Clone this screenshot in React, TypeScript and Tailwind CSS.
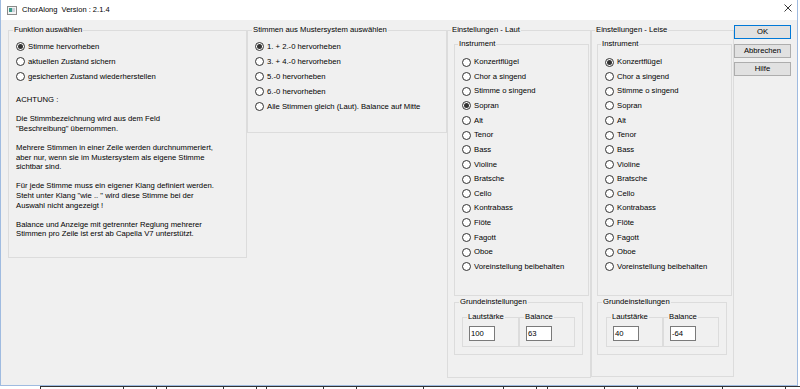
import React from 'react';

const FONT = "font-['Liberation_Sans',Arial,sans-serif]";

function Radio({ label, checked }: { label: string; checked?: boolean }) {
  return (
    <div className="flex items-center gap-[3px] h-[15px]">
      <span className="w-[9px] h-[9px] rounded-full border border-[#333] bg-white flex items-center justify-center shrink-0">
        {checked && <span className="w-[5px] h-[5px] rounded-full bg-[#333]" />}
      </span>
      <span className="whitespace-nowrap">{label}</span>
    </div>
  );
}

function InstRadio({ label, checked }: { label: string; checked?: boolean }) {
  return (
    <div className="flex items-center gap-[3px] h-[14.64px]">
      <span className="w-[9px] h-[9px] rounded-full border border-[#333] bg-white flex items-center justify-center shrink-0">
        {checked && <span className="w-[5px] h-[5px] rounded-full bg-[#333]" />}
      </span>
      <span className="whitespace-nowrap">{label}</span>
    </div>
  );
}

const instruments = [
  'Konzertflügel',
  'Chor a singend',
  'Stimme o singend',
  'Sopran',
  'Alt',
  'Tenor',
  'Bass',
  'Violine',
  'Bratsche',
  'Cello',
  'Kontrabass',
  'Flöte',
  'Fagott',
  'Oboe',
  'Voreinstellung beibehalten',
];

function Legend({ children }: { children: React.ReactNode }) {
  return <legend className="px-[1px] leading-[10px]">{children}</legend>;
}

function Settings({
  title,
  selected,
  volume,
  balance,
  leise,
}: {
  title: string;
  selected: string;
  volume: string;
  balance: string;
  leise?: boolean;
}) {
  return (
    <fieldset
      className={
        leise
          ? 'w-[143px] h-[352px] border border-[#dcdcdc] pl-[3px] shrink-0'
          : 'w-[144px] h-[353px] border border-[#dcdcdc] pl-[3px] shrink-0'
      }
    >
      <Legend>{title}</Legend>
      <fieldset
        className={
          leise
            ? 'ml-[2px] mt-[4px] w-[135px] h-[257px] border border-[#dcdcdc] pl-[3px]'
            : 'ml-[3px] mt-[4px] w-[135px] h-[257px] border border-[#dcdcdc] pl-[3px]'
        }
      >
        <Legend>Instrument</Legend>
        <div className="pl-[4px] pt-[5.7px]">
          {instruments.map((i) => (
            <InstRadio key={i} label={i} checked={i === selected} />
          ))}
        </div>
      </fieldset>
      <fieldset
        className={
          leise
            ? 'ml-[2px] mt-[1px] w-[130px] h-[58px] border border-[#dcdcdc] pl-[4px]'
            : 'ml-[3px] mt-[1px] w-[129px] h-[58px] border border-[#dcdcdc] pl-[4px]'
        }
      >
        <Legend>Grundeinstellungen</Legend>
        <div className={leise ? 'flex ml-[4px] mt-[5px]' : 'flex ml-[3px] mt-[5px]'}>
          <fieldset className="w-[57px] h-[35px] border border-[#dcdcdc] pl-[4px]">
            <Legend>Lautstärke</Legend>
            <div className="ml-[2px] mt-[4px] w-[26px] h-[15px] bg-white border border-[#7a7a7a] pl-[1px] leading-[13px]">
              {volume}
            </div>
          </fieldset>
          <fieldset className="w-[56px] h-[35px] border border-[#dcdcdc] pl-[4px]">
            <Legend>Balance</Legend>
            <div className="ml-[2px] mt-[4px] w-[26px] h-[15px] bg-white border border-[#7a7a7a] pl-[1px] leading-[13px]">
              {balance}
            </div>
          </fieldset>
        </div>
      </fieldset>
    </fieldset>
  );
}

export default function App() {
  return (
    <div className={`w-[800px] h-[389px] bg-white overflow-hidden text-[7.7px] text-black ${FONT}`}>
      <div className="w-[798px] h-[386px] bg-[#f0f0f0] border-l border-r border-b border-[#9fbbe0] flex flex-col">
        {/* title bar */}
        <div className="h-[20px] bg-white flex items-center pl-[6px] pr-[4px] shrink-0">
          <svg width="10" height="9" viewBox="0 0 10 9" className="shrink-0">
            <rect x="0.5" y="0.5" width="9" height="8" fill="#f4f4f4" stroke="#8a8a8a" />
            <rect x="2" y="2" width="3" height="4" fill="#3a9a8a" />
            <rect x="5" y="2" width="3" height="4" fill="#c8d0d8" />
          </svg>
          <span className="ml-[5px] text-[7.5px] leading-none">ChorAlong&nbsp;&nbsp;Version : 2.1.4</span>
          <div className="flex-1" />
          <svg width="8" height="8" viewBox="0 0 8 8" className="mr-[1px] mb-[4px]">
            <path d="M0.5 0.5 L7.5 7.5 M7.5 0.5 L0.5 7.5" stroke="#222" strokeWidth="0.9" />
          </svg>
        </div>

        {/* body */}
        <div className="flex items-start pl-[7px] pt-[5px]">
          <fieldset className="w-[239px] h-[233px] border border-[#dcdcdc] pl-[4px] shrink-0">
            <Legend>Funktion auswählen</Legend>
            <div className="pl-[3px] pt-[4px]">
              <Radio label="Stimme hervorheben" checked />
              <Radio label="aktuellen Zustand sichern" />
              <Radio label="gesicherten Zustand wiederherstellen" />
              <div className="mt-[11px] leading-[9.6px] whitespace-pre">
                <p className="mb-[9.6px]">ACHTUNG :</p>
                <p className="mb-[9.6px]">
                  Die Stimmbezeichnung wird aus dem Feld{'\n'}"Beschreibung" übernommen.
                </p>
                <p className="mb-[9.6px]">
                  Mehrere Stimmen in einer Zeile werden durchnummeriert,{'\n'}aber nur, wenn sie im Mustersystem als eigene Stimme{'\n'}sichtbar sind.
                </p>
                <p className="mb-[9.6px]">
                  Für jede Stimme muss ein eigener Klang definiert werden.{'\n'}Steht unter Klang "wie .. " wird diese Stimme bei der{'\n'}Auswahl nicht angezeigt !
                </p>
                <p>
                  Balance und Anzeige mit getrennter Reglung mehrerer{'\n'}Stimmen pro Zeile ist erst ab Capella V7 unterstützt.
                </p>
              </div>
            </div>
          </fieldset>

          <fieldset className="w-[200px] h-[108px] border border-[#dcdcdc] pl-[4px] shrink-0">
            <Legend>Stimmen aus Mustersystem auswählen</Legend>
            <div className="pl-[3px] pt-[4px]">
              <Radio label="1. + 2.-0 hervorheben" checked />
              <Radio label="3. + 4.-0 hervorheben" />
              <Radio label="5.-0 hervorheben" />
              <Radio label="6.-0 hervorheben" />
              <Radio label="Alle Stimmen gleich (Laut). Balance auf Mitte" />
            </div>
          </fieldset>

          <Settings title="Einstellungen - Laut" selected="Sopran" volume="100" balance="63" />
          <Settings title="Einstellungen - Leise" selected="Konzertflügel" volume="40" balance="-64" leise />

          <div className="w-[57px] flex flex-col gap-[4.5px] shrink-0">
            <button className="h-[14px] bg-[#e1e1e1] border border-[#0078d7] leading-none">OK</button>
            <button className="h-[14px] bg-[#e1e1e1] border border-[#adadad] leading-none">Abbrechen</button>
            <button className="h-[14px] bg-[#e1e1e1] border border-[#adadad] leading-none">Hilfe</button>
          </div>
        </div>
      </div>

      {/* background score peeking below the dialog */}
      <div className="flex h-[3px]">
        <div className="w-[40px]" />
        <div className="flex flex-1 border-t border-[#333]">
          <div className="w-[83px] border-l border-[#333]" />
          <div className="w-[33px] border-l border-[#333]" />
          <div className="w-[10px] border-l border-[#333]" />
          <div className="w-[57px] border-l border-[#333]" />
          <div className="w-[33px] border-l border-[#333]" />
          <div className="w-[10px] border-l border-[#333]" />
          <div className="w-[57px] border-l border-[#333]" />
          <div className="w-[33px] border-l border-[#333]" />
          <div className="w-[67px] border-l border-[#333]" />
          <div className="w-[80px] border-l border-[#333]" />
          <div className="w-[33px] border-l border-[#333]" />
          <div className="w-[11px] border-l border-[#333]" />
          <div className="w-[57px] border-l border-[#333]" />
          <div className="w-[33px] border-l border-[#333]" />
          <div className="w-[85px] border-l border-[#333]" />
          <div className="w-[63px] border-l border-[#333]" />
          <div className="flex-1 border-l border-[#333]" />
        </div>
      </div>
    </div>
  );
}
